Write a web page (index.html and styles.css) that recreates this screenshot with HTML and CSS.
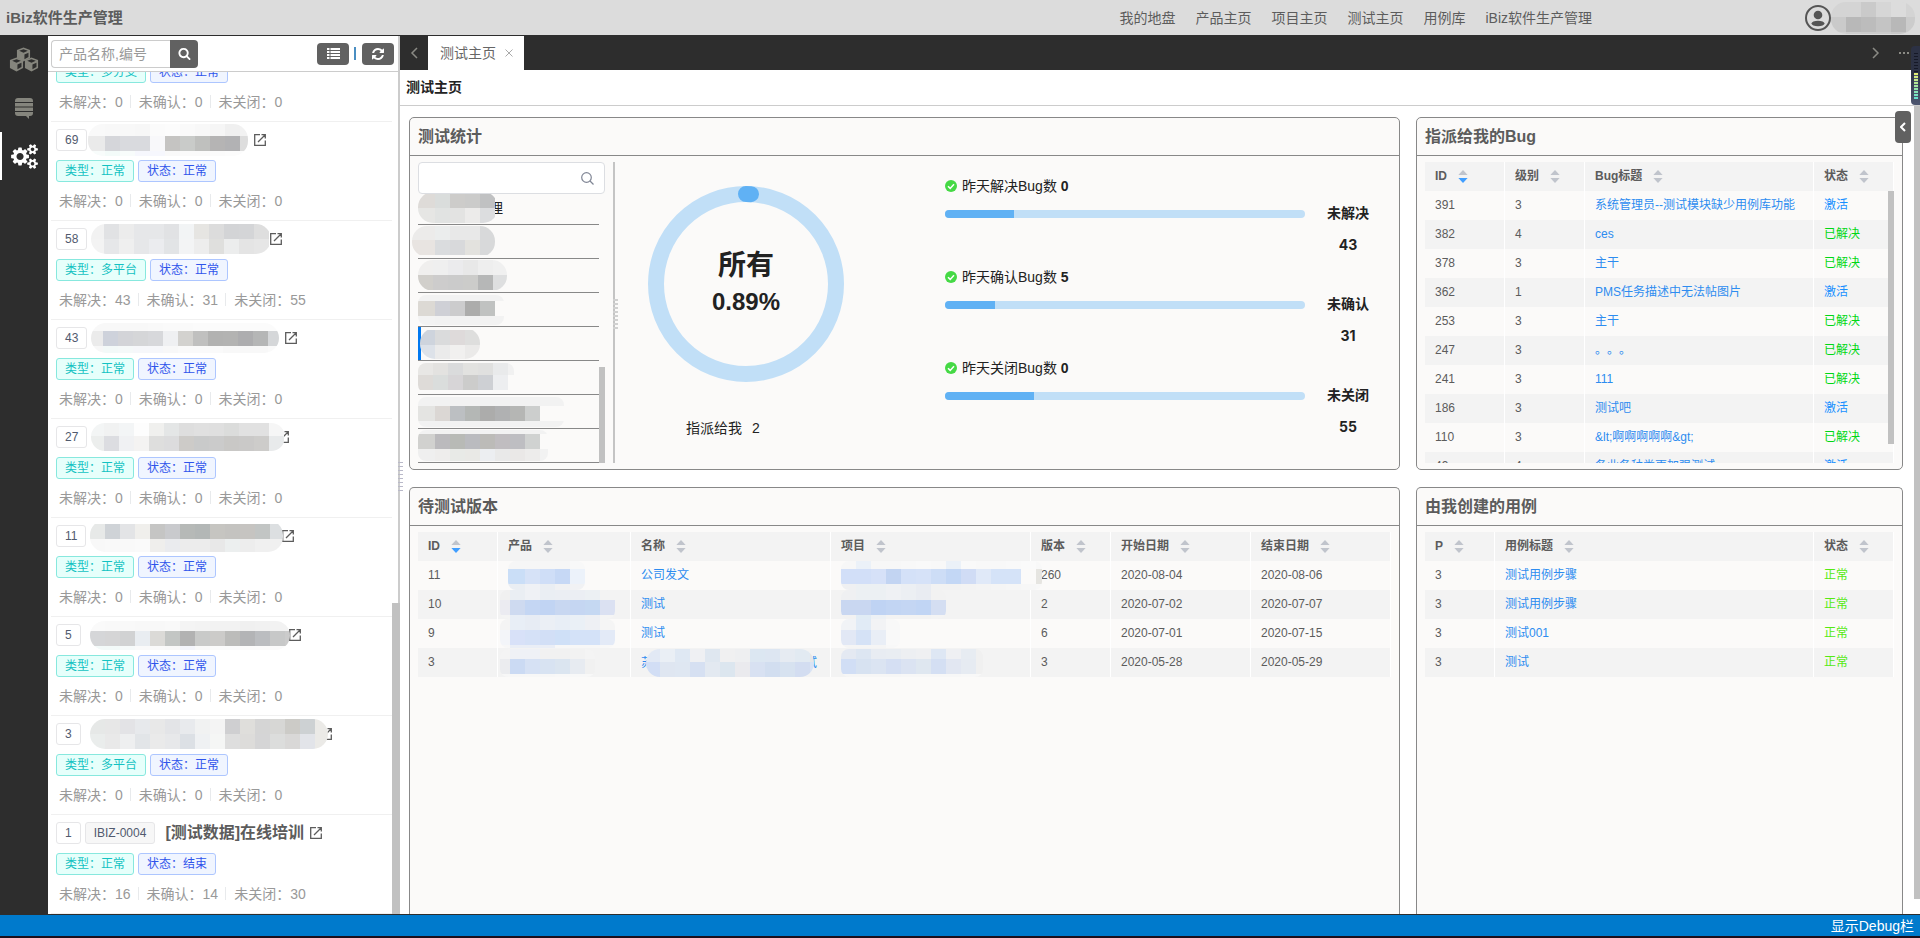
FILE: index.html
```html
<!DOCTYPE html>
<html lang="zh-CN">
<head>
<meta charset="utf-8">
<title>iBiz软件生产管理</title>
<link rel="stylesheet" href="styles.css">
</head>
<body>
<svg class="defs" aria-hidden="true">
  <symbol id="i-open" viewBox="0 0 12 12"><path d="M6 .7H.7v10.600h10.600V6.500M7.500.7h3.800v3.800M11 1 4 8" fill="none" stroke="currentColor" stroke-width="1.300"/></symbol>
  <symbol id="i-sort" viewBox="0 0 10 14"><path class="up" d="M5 0l5 5.500H0z"/><path class="down" d="M5 14l5-5.500H0z"/></symbol>
  <symbol id="i-check" viewBox="0 0 12 12"><circle cx="6" cy="6" r="6" fill="#45d945"/><path d="M3 6.200l2.200 2.200L9 4.300" fill="none" stroke="#fff" stroke-width="1.500"/></symbol>
  <symbol id="i-cube" viewBox="0 0 16 16"><path d="M8 .5l7 2.800v8.400l-7 3.800-7-3.800V3.300z" fill="currentColor"/><path d="M8 2.300l4.600 1.800L8 6 3.400 4.100zM9 8l4.300-1.900v4.500L9 13z" fill="#2d2d2d"/></symbol>
</svg>

<header class="topbar">
  <h1 class="brand">iBiz软件生产管理</h1>
  <nav class="topnav">
    <a href="#">我的地盘</a><a href="#">产品主页</a><a href="#">项目主页</a><a href="#">测试主页</a><a href="#">用例库</a><a href="#">iBiz软件生产管理</a>
  </nav>
  <div class="user">
    <svg class="avatar" viewBox="0 0 26 26"><circle cx="13" cy="13" r="12" fill="none" stroke="#555" stroke-width="2"/><circle cx="13" cy="10" r="4.300" fill="#555"/><ellipse cx="13" cy="18.500" rx="6.500" ry="2.800" fill="#555"/></svg>
    <svg class="mask" viewBox="1830 0 84 32" data-x="1830" data-y="0" data-rows="d4 d4 ca d6 dc d4/ca b8 bc c4 b8 cc/d2 ce cc cc c8 d2"></svg>
  </div>
</header>

<div class="workspace">
  <nav class="rail">
    <button class="rail-btn" aria-label="产品"><svg width="30" height="26" viewBox="0 0 30 26"><use href="#i-cube" x="7" y="0" width="15" height="15"/><use href="#i-cube" x="0" y="10" width="15" height="15"/><use href="#i-cube" x="15" y="10" width="15" height="15"/></svg></button>
    <button class="rail-btn" aria-label="列表"><svg width="18" height="21" viewBox="0 0 18 21" fill="currentColor"><path d="M3 0h12q3 0 3 3v1H0V3q0-3 3-3zM0 5h18v3.500H0zM0 9.500h18V13H0zM0 14h18v1q0 3-3 3h-1v3l-3-3H3q-3 0-3-3z"/></svg></button>
    <button class="rail-btn active" aria-label="测试"><svg width="27" height="25" viewBox="0 0 1920 1792" fill="currentColor"><path d="M896 896q0-106-75-181t-181-75-181 75-75 181 75 181 181 75 181-75 75-181zm768 512q0-52-38-90t-90-38-90 38-38 90q0 53 37.500 90.500t90.500 37.500 90.500-37.500 37.500-90.500zm0-1024q0-52-38-90t-90-38-90 38-38 90q0 53 37.500 90.500t90.500 37.500 90.500-37.500 37.500-90.500zm-384 421v185q0 10-7 19.500t-16 10.500l-155 24q-11 35-32 76 34 48 90 115 7 11 7 20 0 12-7 19-23 30-82.500 89.500t-78.500 59.500q-11 0-21-7l-115-90q-37 19-77 31-11 108-23 155-7 24-30 24h-186q-11 0-20-7.500t-10-17.500l-23-153q-34-10-75-31l-118 89q-7 7-20 7-11 0-21-8-144-133-144-160 0-9 7-19 10-14 41-53t47-61q-23-44-35-82l-152-24q-10-1-17-9.500t-7-19.500v-185q0-10 7-19.500t16-10.500l155-24q11-35 32-76-34-48-90-115-7-11-7-20 0-12 7-20 22-30 82-89t79-59q11 0 21 7l115 90q34-18 77-32 11-108 23-154 7-24 30-24h186q11 0 20 7.500t10 17.500l23 153q34 10 75 31l118-89q8-7 20-7 11 0 21 8 144 133 144 160 0 8-7 19-12 16-42 54t-45 60q23 48 34 82l152 23q10 2 17 10.500t7 19.500zm640 533v140q0 16-149 31-12 27-30 52 51 113 51 138 0 4-4 7-122 71-124 71-8 0-46-47t-52-68q-20 2-30 2t-30-2q-14 21-52 68t-46 47q-2 0-124-71-4-3-4-7 0-25 51-138-18-25-30-52-149-15-149-31v-140q0-16 149-31 13-29 30-52-51-113-51-138 0-4 4-7 4-2 35-20t59-34 30-16q8 0 46 46.500t52 67.500q20-2 30-2t30 2q51-71 92-112l6-2q4 0 124 70 4 3 4 7 0 25-51 138 17 23 30 52 149 15 149 31zm0-1024v140q0 16-149 31-12 27-30 52 51 113 51 138 0 4-4 7-122 71-124 71-8 0-46-47t-52-68q-20 2-30 2t-30-2q-14 21-52 68t-46 47q-2 0-124-71-4-3-4-7 0-25 51-138-18-25-30-52-149-15-149-31v-140q0-16 149-31 13-29 30-52-51-113-51-138 0-4 4-7 4-2 35-20t59-34 30-16q8 0 46 46.500t52 67.500q20-2 30-2t30 2q51-71 92-112l6-2q4 0 124 70 4 3 4 7 0 25-51 138 17 23 30 52 149 15 149 31z"/></svg></button>
  </nav>

  <aside class="sidebar">
    <form class="search-row">
      <input class="search-input" type="text" placeholder="产品名称,编号" aria-label="产品名称,编号">
      <button class="search-btn" type="button" aria-label="搜索"><svg width="13" height="13" viewBox="0 0 1792 1792" fill="#fff"><path d="M1216 832q0-185-131.500-316.500t-316.500-131.500-316.500 131.500-131.500 316.500 131.500 316.500 316.500 131.500 316.500-131.500 131.500-316.500zm512 832q0 52-38 90t-90 38q-54 0-90-38l-343-342q-179 124-399 124-143 0-273.500-55.500t-225-150-150-225-55.500-273.500 55.500-273.500 150-225 225-150 273.500-55.500 273.500 55.500 225 150 150 225 55.500 273.500q0 220-124 399l343 343q37 37 37 90z"/></svg></button>
      <button class="tool-btn push" type="button" aria-label="列表视图"><svg width="13" height="11" viewBox="0 0 13 11" fill="#fff"><path d="M0 0h2.500v2H0zM3.500 0H13v2H3.500zM0 3h2.500v2H0zM3.500 3H13v2H3.500zM0 6h2.500v2H0zM3.500 6H13v2H3.500zM0 9h2.500v2H0zM3.500 9H13v2H3.500z"/></svg></button>
      <span class="tool-sep"></span>
      <button class="tool-btn" type="button" aria-label="刷新"><svg width="14" height="14" viewBox="0 0 1792 1792" fill="#fff"><path d="M1639 1056q0 5-1 7-64 268-268 434.500t-478 166.500q-146 0-282.500-55t-243.500-157l-129 129q-19 19-45 19t-45-19-19-45v-448q0-26 19-45t45-19h448q26 0 45 19t19 45-19 45l-137 137q71 66 161 102t187 36q134 0 250-65t186-179q11-17 53-117 8-23 30-23h192q13 0 22.500 9.500t9.500 22.500zm25-800v448q0 26-19 45t-45 19h-448q-26 0-45-19t-19-45 19-45l138-138q-148-137-349-137-134 0-250 65t-186 179q-11 17-53 117-8 23-30 23h-199q-13 0-22.500-9.500t-9.500-22.500v-7q65-268 270-434.500t480-166.500q146 0 284 55.500t245 156.500l130-129q19-19 45-19t45 19 19 45z"/></svg></button>
    </form>
    <div class="product-list">
      <article class="product">
        <div class="p-title"><span class="badge">70</span></div>
        <div class="p-tags"><span class="tag teal">类型：多分支</span><span class="tag blue">状态：正常</span></div>
        <div class="p-stats"><span>未解决：0</span><span>未确认：0</span><span>未关闭：0</span></div>
      </article>
      <article class="product">
        <div class="p-title"><span class="badge">69</span><svg class="mask near" viewBox="88 123 160 32" data-x="90" data-y="120" data-rows="f9 f8 f8 f7 fb fc fa f8 f6 f0 f2/ea d5d6da d9dade d9dade f8f8fa c5c4c2 c9cbc9 bfc0be b5b4b4 b2b2b4 dd/f8fcfb f3fbf9 f8fcfb f6f7fd f6f7fd f9 fa fa fb fc fc"></svg><a class="open" href="#" aria-label="打开"><svg><use href="#i-open"/></svg></a></div>
        <div class="p-tags"><span class="tag teal">类型：正常</span><span class="tag blue">状态：正常</span></div>
        <div class="p-stats"><span>未解决：0</span><span>未确认：0</span><span>未关闭：0</span></div>
      </article>
      <article class="product">
        <div class="p-title"><span class="badge">58</span><svg class="mask" viewBox="92 225 180 30" data-x="90" data-y="225" data-rows="f2 e1e2e4 ec e6e7e9 e6e7e9 e1e2e4 f2f4f5 e6e5e2 dc d3d4d6 d4d5d7 de/f3 e6e7e9 ef e6e7e9 ebecef e2e4e6 f3f4f5 ed dfdfdd eceded e4 e6"></svg><a class="open tuck" href="#" aria-label="打开"><svg><use href="#i-open"/></svg></a></div>
        <div class="p-tags"><span class="tag teal">类型：多平台</span><span class="tag blue">状态：正常</span></div>
        <div class="p-stats"><span>未解决：43</span><span>未确认：31</span><span>未关闭：55</span></div>
      </article>
      <article class="product">
        <div class="p-title"><span class="badge">43</span><svg class="mask" viewBox="93 322 188 30" data-x="90" data-y="315" data-rows="f8 f8 f8 f8 f9 fa fa fb fb fb fb fb fb/eb ced2db d3d4d8 d5d6d8 d7d8db eff0f2 d3d2cf c0c0bf b2b2b1 b3b3b2 adadaf b5b6b6 d5d7d9/f7 f3f9f8 f5f9f9 f6f7fa f6f7fa f8 fa fa fa f8 f8 f8 fa"></svg><a class="open" href="#" aria-label="打开"><svg><use href="#i-open"/></svg></a></div>
        <div class="p-tags"><span class="tag teal">类型：正常</span><span class="tag blue">状态：正常</span></div>
        <div class="p-stats"><span>未解决：0</span><span>未确认：0</span><span>未关闭：0</span></div>
      </article>
      <article class="product">
        <div class="p-title"><span class="badge">27</span><svg class="mask" viewBox="92 422 194 28" data-x="90" data-y="420" data-rows="f3f5f5 f1f2f2 f3f5f6 fd f0f0ee e4e6e6 de e0 df dbdcdb e1 e1 f6/eceeed dcdde1 f0f1f3 f4f3f2 dededd dcdcdd cdcbc8 c9caca cb c9c8c6 cac9c8 cdccca e8eaeb"></svg><a class="open tuck-deep" href="#" aria-label="打开"><svg><use href="#i-open"/></svg></a></div>
        <div class="p-tags"><span class="tag teal">类型：正常</span><span class="tag blue">状态：正常</span></div>
        <div class="p-stats"><span>未解决：0</span><span>未确认：0</span><span>未关闭：0</span></div>
      </article>
      <article class="product">
        <div class="p-title"><span class="badge">11</span><svg class="mask" viewBox="90 521 193 32" data-x="90" data-y="525" data-rows="e7e9e8 cfd3d7 e3e4e6 f0efec c5c5c4 c9cacd b6b9b7 b3b7b6 c6c5c1 c4c3c0 c6c4c1 c2c5c4 dcdfe1/f8 f9 f9 fa efeeec eaebee ec ec e8 ecefef ed f0 f0"></svg><a class="open tuck" href="#" aria-label="打开"><svg><use href="#i-open"/></svg></a></div>
        <div class="p-tags"><span class="tag teal">类型：正常</span><span class="tag blue">状态：正常</span></div>
        <div class="p-stats"><span>未解决：0</span><span>未确认：0</span><span>未关闭：0</span></div>
      </article>
      <article class="product">
        <div class="p-title"><span class="badge">5</span><svg class="mask far" viewBox="90 620 200 29" data-x="90" data-y="615" data-rows="fa f9 f9 f8 f8 f9 f4 f3 f2 f2 f0 f1 f2 f2/d5d6d8 d5d5d6 d1d2d3 e9edf1 dbdad7 c3c6c4 b2 c9cac9 cccbc9 bcbcba b3b4b6 bbbdc0 c7c8c8 cb/f3faf9 f3faf9 f6fafa fa fa f9 f4f5fb f9 fb fb fb fb fb fb"></svg><a class="open tuck" href="#" aria-label="打开"><svg><use href="#i-open"/></svg></a></div>
        <div class="p-tags"><span class="tag teal">类型：正常</span><span class="tag blue">状态：正常</span></div>
        <div class="p-stats"><span>未解决：0</span><span>未确认：0</span><span>未关闭：0</span></div>
      </article>
      <article class="product">
        <div class="p-title"><span class="badge">3</span><svg class="mask far" viewBox="90 720 238 30" data-x="90" data-y="720" data-rows="e6e8e7 e7 e3e3e6 e7e9ec e8 e3e4e7 e8eaed f1f2f2 f4 cfcfd1 dfdedb d5 d7d7d5 cccbc7 cdd1d3 ebeae7/eaedec e9 eeeff0 e2e5e8 ea e7e8ea dce0e5 eff1f3 f5f6f5 de dddcda d5d5d6 dcdddc d9d8d7 e2e4e9 ebeae7"></svg><a class="open tuck-deep" href="#" aria-label="打开"><svg><use href="#i-open"/></svg></a></div>
        <div class="p-tags"><span class="tag teal">类型：多平台</span><span class="tag blue">状态：正常</span></div>
        <div class="p-stats"><span>未解决：0</span><span>未确认：0</span><span>未关闭：0</span></div>
      </article>
      <article class="product">
        <div class="p-title"><span class="badge">1</span><span class="badge code">IBIZ-0004</span><strong class="p-name">[测试数据]在线培训</strong><a class="open" href="#" aria-label="打开"><svg><use href="#i-open"/></svg></a></div>
        <div class="p-tags"><span class="tag teal">类型：正常</span><span class="tag blue">状态：结束</span></div>
        <div class="p-stats"><span>未解决：16</span><span>未确认：14</span><span>未关闭：30</span></div>
      </article>
    </div>
    <div class="side-thumb"></div>
    <div class="grip side-grip"></div>
  </aside>

  <main class="main">
    <div class="tabs">
      <button class="tab-arrow" aria-label="向左"><svg width="8" height="12" viewBox="0 0 8 12"><path d="M7 1L2 6l5 5" fill="none" stroke="#8a8a84" stroke-width="1.500"/></svg></button>
      <div class="tab"><span>测试主页</span><button class="tab-close" aria-label="关闭"><svg width="8" height="8" viewBox="0 0 8 8"><path d="M.5.5l7 7m0-7l-7 7" stroke="#aaa"/></svg></button></div>
      <button class="tab-arrow push" aria-label="向右"><svg width="8" height="12" viewBox="0 0 8 12"><path d="M1 1l5 5-5 5" fill="none" stroke="#8a8a84" stroke-width="1.500"/></svg></button>
      <button class="tab-more" aria-label="更多"><svg width="12" height="2" viewBox="0 0 12 2" fill="#8a8a84"><path d="M0 0h2v2H0zM4 0h2v2H4zM8 0h2v2H8z"/></svg></button>
    </div>
    <h2 class="page-title">测试主页</h2>

    <div class="board">
      <section class="card">
        <h3 class="card-title">测试统计</h3>
        <div class="card-body stats">
          <div class="picker">
            <label class="picker-search"><input type="text" aria-label="搜索产品"><svg width="13" height="13" viewBox="0 0 13 13"><circle cx="5.500" cy="5.500" r="4.800" fill="none" stroke="#808695" stroke-width="1.200"/><path d="M9 9l3.500 3.500" stroke="#808695" stroke-width="1.200"/></svg></label>
            <ul class="picker-list">
              <li><svg class="mask" viewBox="418 194 80 31" data-x="420" data-y="195" data-rows="dedbd8 dadddc cdccca cbcbca c0c1c2/e6e6e4 e1e3e2 e3e3e2 ecebea dcdddf"></svg><span class="under">理</span></li>
              <li><svg class="mask wide" viewBox="412 226 83 31" data-x="420" data-y="225" data-rows="ecebea ebeded e8 e8 d8d9da/e8e4e1 dadcde d8d9db e3e2de d8d9da"></svg></li>
              <li><svg class="mask" viewBox="420 255 89 31" data-x="420" data-y="255" data-rows="f0efee ef ebebed e8 ee f0/d1cfcb cdcccc cb ccccca b6b7b7 dedfe0"></svg></li>
              <li><svg class="mask square" viewBox="418 294 86 30" data-x="420" data-y="285" data-rows="f2 f2 f2 f2 f2 f2/dcd9d4 cfd0d6 cccccd acacab c0c2c1 fbfaf9/f3 f2 f2 f2 f2 f2"></svg></li>
              <li class="active"><svg class="mask" viewBox="420 328 60 31" data-x="420" data-y="330" data-rows="ced4dd dadbdc dedada dededd/dde2e9 ebebeb f1f0ef ebeae9"></svg></li>
              <li><svg class="mask square" viewBox="420 363 96 30" data-x="420" data-y="360" data-rows="e8e7e5 e3e2e0 dadbdc e2e2e0 e0e0df e9eaeb f1/dedbd8 dadddc d7d5d7 cccccb ced0d4 edeef0 fbfaf9"></svg></li>
              <li><svg class="mask square" viewBox="418 396 146 30" data-x="420" data-y="390" data-rows="f2 f2 f2 f2 f2 f2 f2 f2 f2 f2/e4e4e2 dbd7d4 bcbfc2 b4b7b5 acacab b0b1b2 b5b6b4 cccecd fbfaf9 fbfaf9/f2 f2 f2 f2 f2 f2 f2 f2 f2 f2"></svg></li>
              <li><svg class="mask square" viewBox="418 431 130 31" data-x="420" data-y="420" data-rows="f2 f2 f2 f2 f2 f2 f2 f2 f2/d1d1cf bbbabd b8bab6 babbbf bcbbb8 c0bdc0 bebec2 d0d2d1 fbfaf9/ef eeedec e8eae7 e9e9e6 eceef1 e9 eae8e7 edeceb f2"></svg></li>
            </ul>
            <div class="picker-thumb"></div>
          </div>
          <div class="split"><div class="grip split-grip"></div></div>
          <div class="gauge">
            <div class="ring">
              <svg viewBox="0 0 196 196"><circle cx="98" cy="98" r="90" fill="none" stroke="#c1dff7" stroke-width="16"/><path d="M98 8A90 90 0 0 1 103 8.140" fill="none" stroke="#60b1f4" stroke-width="16" stroke-linecap="round"/></svg>
              <div class="ring-text"><strong class="ring-name">所有</strong><strong class="ring-value">0.89%</strong></div>
            </div>
            <p class="assigned"><span>指派给我</span><span>2</span></p>
          </div>
          <div class="meters">
            <div class="meter"><div class="meter-main"><p class="meter-label"><svg><use href="#i-check"/></svg><span>昨天解决Bug数 <b>0</b></span></p><div class="bar"><div class="fill" style="width:19.200%"></div></div></div><div class="meter-side"><b>未解决</b><b class="num">43</b></div></div>
            <div class="meter"><div class="meter-main"><p class="meter-label"><svg><use href="#i-check"/></svg><span>昨天确认Bug数 <b>5</b></span></p><div class="bar"><div class="fill" style="width:13.900%"></div></div></div><div class="meter-side"><b>未确认</b><b class="num">31</b></div></div>
            <div class="meter"><div class="meter-main"><p class="meter-label"><svg><use href="#i-check"/></svg><span>昨天关闭Bug数 <b>0</b></span></p><div class="bar"><div class="fill" style="width:24.700%"></div></div></div><div class="meter-side"><b>未关闭</b><b class="num">55</b></div></div>
          </div>
        </div>
      </section>

      <section class="card">
        <h3 class="card-title">指派给我的Bug</h3>
        <div class="card-body">
          <div class="scroll">
          <table class="grid">
            <colgroup><col class="w80"><col class="w80"><col><col class="w80"></colgroup>
            <thead><tr><th>ID<svg class="sort desc"><use href="#i-sort"/></svg></th><th>级别<svg class="sort"><use href="#i-sort"/></svg></th><th>Bug标题<svg class="sort"><use href="#i-sort"/></svg></th><th>状态<svg class="sort"><use href="#i-sort"/></svg></th></tr></thead>
            <tbody>
              <tr><td>391</td><td>3</td><td><a href="#">系统管理员--测试模块缺少用例库功能</a></td><td class="s-active">激活</td></tr>
              <tr><td>382</td><td>4</td><td><a href="#">ces</a></td><td class="s-done">已解决</td></tr>
              <tr><td>378</td><td>3</td><td><a href="#">主干</a></td><td class="s-done">已解决</td></tr>
              <tr><td>362</td><td>1</td><td><a href="#">PMS任务描述中无法帖图片</a></td><td class="s-active">激活</td></tr>
              <tr><td>253</td><td>3</td><td><a href="#">主干</a></td><td class="s-done">已解决</td></tr>
              <tr><td>247</td><td>3</td><td><a href="#">。。。</a></td><td class="s-done">已解决</td></tr>
              <tr><td>241</td><td>3</td><td><a href="#">111</a></td><td class="s-done">已解决</td></tr>
              <tr><td>186</td><td>3</td><td><a href="#">测试吧</a></td><td class="s-active">激活</td></tr>
              <tr><td>110</td><td>3</td><td><a href="#">&amp;lt;啊啊啊啊啊&amp;gt;</a></td><td class="s-done">已解决</td></tr>
              <tr><td>49</td><td>4</td><td><a href="#">各业各种类更加强测试</a></td><td class="s-active">激活</td></tr>
            </tbody>
          </table>
          <div class="table-thumb"></div>
          </div>
        </div>
      </section>

      <section class="card tail">
        <h3 class="card-title">待测试版本</h3>
        <div class="card-body">
          <table class="grid">
            <colgroup><col class="w80"><col><col class="w200"><col class="w200"><col class="w80"><col class="w140"><col class="w140"></colgroup>
            <thead><tr><th>ID<svg class="sort desc"><use href="#i-sort"/></svg></th><th>产品<svg class="sort"><use href="#i-sort"/></svg></th><th>名称<svg class="sort"><use href="#i-sort"/></svg></th><th>项目<svg class="sort"><use href="#i-sort"/></svg></th><th>版本<svg class="sort"><use href="#i-sort"/></svg></th><th>开始日期<svg class="sort"><use href="#i-sort"/></svg></th><th>结束日期<svg class="sort"><use href="#i-sort"/></svg></th></tr></thead>
            <tbody>
              <tr><td>11</td><td class="veil"><svg class="mask square" viewBox="508 562 77 29" data-x="510" data-y="555" data-rows="f6 f6 f6 f6 f8/cadef7 d6e2f7 cfdef7 c6d8f5 ecf2fa/eaeef3 eff1f5 eaeef3 f0f1f3 f1f2f4"></svg></td><td><a href="#">公司发文</a></td><td class="veil"><svg class="mask square" viewBox="840 562 201 29" data-x="840" data-y="555" data-rows="f7 ebf1f8 f7 f7 f8 f9 f8 ebf1f8 f9 f8 f8 f9 fa f8/d2dff8 d2dff8 d6e1f8 c2d4f2 d4e1f8 d6e2f8 cdddf6 c3d7f5 d0dcf5 e0e9f8 d5e3f8 d5e3f8 fbfaf9 e6e5e1/eff0f2 ecf0f3 ecf0f3 eff1f4 eceff3 e9ecf2 f2 f2 f3 f4 f5 f6 f7 f8"></svg></td><td>260</td><td>2020-08-04</td><td>2020-08-06</td></tr>
              <tr><td>10</td><td class="veil out"><svg class="mask square" viewBox="500 590 115 29" data-x="495" data-y="585" data-rows="f0 eaeef3 eff1f5 eaeef3 ebeef3 ebeef3 ecf0f3 f3/ebebf1 cedaf0 c4d6f3 c1d4f3 c8d7f1 c5d6f2 c5d8f2 dbe1f2/f4 e8eef6 e7ecf4 ebeff5 e8eef6 eaf0f6 eef0f4 f5"></svg></td><td><a href="#">测试</a></td><td class="veil"><svg class="mask square" viewBox="840 590 105 29" data-x="840" data-y="585" data-rows="eff0f2 ecf0f3 ecf0f3 eff1f4 eceff3 e9ecf2 f2/c9d7f1 c9d7f1 bfd3f3 c2d5f3 c4d6f3 c1d5f4 d4def2/f2 e1ecf5 edf1f5 f3 f3 f3 f4"></svg></td><td>2</td><td>2020-07-02</td><td>2020-07-07</td></tr>
              <tr><td>9</td><td class="veil out"><svg class="mask square" viewBox="500 619 115 29" data-x="495" data-y="615" data-rows="f4 e8eef6 e7ecf4 ebeff5 e8eef6 eaf0f6 eef0f4 f5/f3f5f9 d8e1f8 d5e1f7 d2dff6 cfe0f7 d4e2f8 d4e2f8 e3eaf7/f7 eaeef6 eaeef6 eaeef6 f7 f7 f7 f8"></svg></td><td><a href="#">测试</a></td><td class="veil"><svg class="mask square" viewBox="840 619 59 29" data-x="840" data-y="615" data-rows="f1f3f6 e1ebf6 f2f3f5 f8/e2e8f5 d5e2f6 e9eef6 f9/f5 f5 f5 f8"></svg></td><td>6</td><td>2020-07-01</td><td>2020-07-15</td></tr>
              <tr><td>3</td><td class="veil out"><svg class="mask square" viewBox="500 650 95 28" data-x="495" data-y="645" data-rows="f4 eff1f6 eff1f6 f1 f1 f2 f4/ebecef cbdaf3 d6e1f4 d8e3f2 dbe5f0 e7ebf1 f1/f7 f7 f7 f7 f8 f8 f8"></svg></td><td class="veil-name"><a class="veil-link" href="#"><span>苏</span><svg class="mask" viewBox="646 647 168 28" data-x="645" data-y="645" data-rows="e2e9f5 eaeff5 dfe8f3 eff0f3 dfe7f0 f0f0f1 eeeff1 dce7f2 dde6f2 e6ebf2 e2eaf2 e7/d2def5 dfe6f1 dfe7f2 d6e0f2 e3e9f1 dce6ef eaeaee d8e1f2 d2def0 d7e2f0 d3ddf1 d9e3f4"></svg><span class="under">试</span></a></td><td class="veil"><svg class="mask square" viewBox="840 650 142 28" data-x="840" data-y="645" data-rows="e4e9f2 dde6f2 e8ecf2 e9edf2 edeff2 eff0f2 dee7f4 eff0f3 e7ecf2 f0/d1def5 d7e2f1 dbe4f2 d5dff3 dbe3f2 dfe7f0 d4dff3 e2e7f2 e6ebf2 f0/f6 f6 f6 f6 f7 f7 f7 f7 f8 f8"></svg></td><td>3</td><td>2020-05-28</td><td>2020-05-29</td></tr>
            </tbody>
          </table>
        </div>
      </section>

      <section class="card tail">
        <h3 class="card-title">由我创建的用例</h3>
        <div class="card-body">
          <table class="grid">
            <colgroup><col class="w70"><col><col class="w80"></colgroup>
            <thead><tr><th>P<svg class="sort"><use href="#i-sort"/></svg></th><th>用例标题<svg class="sort"><use href="#i-sort"/></svg></th><th>状态<svg class="sort"><use href="#i-sort"/></svg></th></tr></thead>
            <tbody>
              <tr><td>3</td><td><a href="#">测试用例步骤</a></td><td class="s-ok">正常</td></tr>
              <tr><td>3</td><td><a href="#">测试用例步骤</a></td><td class="s-ok">正常</td></tr>
              <tr><td>3</td><td><a href="#">测试001</a></td><td class="s-ok">正常</td></tr>
              <tr><td>3</td><td><a href="#">测试</a></td><td class="s-ok">正常</td></tr>
            </tbody>
          </table>
        </div>
      </section>
    </div>
    <div class="main-thumb"></div>
    <button class="drawer-btn" aria-label="展开"><svg width="6" height="10" viewBox="0 0 6 10"><path d="M5 1L1 5l4 4" fill="none" stroke="#fff" stroke-width="2"/></svg></button>
    <div class="level"><span class="level-off"></span><span class="level-on"></span></div>
  </main>
</div>

<footer class="debugbar"><button type="button">显示Debug栏</button></footer>
<script src="masks.js"></script>
</body>
</html>
```
FILE: styles.css
```css
* { box-sizing: border-box; }
html, body { height: 100%; }
body {
  margin: 0;
  display: flex;
  flex-direction: column;
  overflow: hidden;
  background: #fff;
  color: #222;
  font: 14px/20px "Liberation Sans", "Noto Sans CJK SC", sans-serif;
}
h1, h2, h3, p, ul { margin: 0; padding: 0; }
ul { list-style: none; }
a { color: inherit; text-decoration: none; }
button { margin: 0; padding: 0; border: 0; background: none; font: inherit; color: inherit; display: flex; align-items: center; justify-content: center; }
input { font: inherit; outline: 0; }
svg { display: block; flex: none; }
.defs { position: absolute; width: 0; height: 0; }
.push { margin-left: auto; }
.mask { border-radius: 15px; overflow: hidden; position: relative; z-index: 1; }
.mask.square { border-radius: 8px; }

/* top bar */
.topbar { height: 35px; flex: none; display: flex; align-items: center; padding: 0 6px; background: #dcdcdc; color: #5c5c5c; }
.brand { font-size: 15px; line-height: 24px; }
.topnav { display: flex; gap: 20px; margin-left: auto; }
.user { display: flex; align-items: center; width: 322px; padding-left: 213px; }
.avatar { width: 26px; height: 26px; }

.workspace { flex: 1; min-height: 0; display: flex; border-top: 1px solid #2d2d2d; border-bottom: 1px solid #2d2d2d; }

/* icon rail */
.rail { width: 48px; flex: none; background: #2d2d2d; }
.rail-btn { width: 48px; height: 48px; color: #85857d; }
.rail-btn.active { color: #fff; box-shadow: inset 2px 0 #fff; }

/* product sidebar */
.sidebar { position: relative; width: 352px; flex: none; display: flex; flex-direction: column; border-right: 2px solid #ccc; }
.search-row { height: 36px; flex: none; display: flex; align-items: center; padding: 0 4px 0 3px; border-bottom: 1px solid #ccc; }
.search-input { width: 119px; height: 28px; padding: 0 7px; border: 1px solid #ccc; border-right: 0; border-radius: 4px 0 0 4px; color: #555; }
.search-input::placeholder { color: #999; opacity: 1; }
.search-btn { width: 28px; height: 28px; background: #616161; border-radius: 0 4px 4px 0; }
.tool-btn { width: 32px; height: 22px; background: #616161; border-radius: 4px; }
.tool-sep { width: 2px; height: 13px; margin: 0 6px 0 5px; background: #4a8ec2; }
.product-list { flex: 1; min-height: 0; overflow: hidden; display: flex; flex-direction: column; justify-content: flex-end; padding: 0 6px 0 3px; }
.product { flex: none; padding: 7px 0 9px 5px; border-bottom: 1px solid #f0f0f0; }
.p-title { display: flex; align-items: center; height: 22px; }
.badge { height: 22px; padding: 0 8px; margin-right: 4px; border: 1px solid #e6e6e8; border-radius: 3px; font-size: 12px; line-height: 20px; color: #515a6e; }
.badge.code { background: #f7f7f7; margin-right: 10px; }
.p-title .mask { margin: -8px 0; }
.p-title .near { margin-left: -3px; }
.p-title .far { margin-left: 5px; }
.p-name { font-size: 16px; color: #5c5c5c; }
.open { margin-left: 6px; color: #5c5c5c; }
.open svg { width: 12px; height: 12px; }
.open.tuck { margin-left: -1px; }
.open.tuck-deep { margin-left: -8px; }
.p-tags { display: flex; gap: 4px; margin-top: 9px; }
.tag { height: 22px; padding: 0 8px; border: 1px solid; border-radius: 3px; font-size: 12px; line-height: 20px; }
.teal { color: #13c2c2; border-color: #87e8de; background: #e6fffb; }
.blue { color: #2f54eb; border-color: #adc6ff; background: #f0f5ff; }
.p-stats { display: flex; margin: 9px 0 0 3px; color: #999; }
.p-stats span { position: relative; padding-right: 16px; }
.p-stats span:not(:last-child)::after { content: ""; position: absolute; right: 8px; top: 3px; width: 1px; height: 13px; background: #e8eaec; }
.side-thumb { position: absolute; right: -2px; bottom: 0; width: 8px; height: 311px; background: #c1c1c1; }
.grip { position: absolute; z-index: 2; width: 5px; background: repeating-linear-gradient(#b9b9c9 0 1px, transparent 1px 4px); }
.side-grip { right: -5px; top: 426px; height: 30px; }

/* tabs and page title */
.main { position: relative; flex: 1; min-width: 0; display: flex; flex-direction: column; }
.tabs { height: 34px; flex: none; display: flex; background: #2d2d2d; }
.tab-arrow { width: 28px; }
.tab-more { width: 30px; }
.tab { display: flex; align-items: center; gap: 9px; width: 96px; padding-left: 12px; background: #fff; color: #666; }
.page-title { height: 36px; flex: none; padding-left: 6px; border-bottom: 1px solid #ccc; font-size: 14px; line-height: 34px; }

/* cards */
.board { flex: 1; min-height: 0; display: grid; grid-template-columns: minmax(0, 991fr) minmax(0, 487fr); grid-template-rows: 353px minmax(0, 1fr); gap: 17px 16px; padding: 11px 17px 0 9px; overflow: hidden; }
.card { display: flex; flex-direction: column; min-height: 0; border: 1px solid #888; border-radius: 5px; background: #fbfaf9; }
.card.tail { border-bottom: 0; border-radius: 5px 5px 0 0; }
.card-title { flex: none; height: 38px; padding-left: 8px; border-bottom: 1px solid #888; font-size: 16px; line-height: 37px; color: #5c5c5c; }
.card-body { flex: 1; min-height: 0; padding: 6px 8px; }

/* statistics card */
.stats { display: flex; }
.picker { position: relative; width: 187px; flex: none; display: flex; flex-direction: column; }
.picker-search { display: flex; align-items: center; height: 32px; flex: none; padding-right: 10px; border: 1px solid #dcdee2; border-radius: 4px; background: #fff; }
.picker-search input { flex: 1; min-width: 0; border: 0; background: none; }
.picker-list { flex: 1; min-height: 0; overflow: hidden; display: flex; flex-direction: column; justify-content: flex-end; margin: 0 6px 0 -8px; padding-left: 8px; }
.picker-list li { flex: none; height: 34px; display: flex; align-items: center; border-bottom: 1px solid #888; }
.picker-list li.active { box-shadow: inset 3px 0 #0078f0; padding-left: 2px; }
.mask.wide { margin-left: -6px; }
.under { margin-left: -9px; }
.picker-thumb { position: absolute; right: 0; bottom: 0; width: 6px; height: 96px; background: #c1c1c1; }
.split { position: relative; width: 2px; margin-left: 8px; background: #c4c4c4; }
.split-grip { top: 137px; left: 0; height: 30px; background: repeating-linear-gradient(#d0d0d0 0 2px, transparent 2px 4px); }
.gauge { flex: none; width: 262px; padding-top: 24px; display: flex; flex-direction: column; align-items: center; }
.ring { display: grid; width: 196px; height: 196px; }
.ring > * { grid-area: 1 / 1; }
.ring-text { display: flex; flex-direction: column; align-items: center; justify-content: center; }
.ring-name { font-size: 28px; line-height: 36px; }
.ring-value { font-size: 24px; line-height: 36px; }
.assigned { display: flex; gap: 10px; margin-top: 36px; padding-right: 46px; }
.meters { flex: 1; min-width: 0; padding: 14px 8px 0 68px; }
.meter { display: flex; gap: 22px; height: 91px; }
.meter-main { flex: 1; min-width: 0; }
.meter-label { display: flex; align-items: center; gap: 5px; }
.meter-label svg { width: 12px; height: 12px; }
.bar { height: 8px; margin-top: 14px; border-radius: 4px; background: #c1dff7; overflow: hidden; }
.fill { height: 8px; background: #60b1f4; }
.meter-side { width: 42px; margin-right: 14px; padding-top: 27px; display: flex; flex-direction: column; gap: 12px; align-items: center; }
.num { font-family: Inter, sans-serif; }

/* tables */
.scroll { position: relative; height: 100%; overflow: hidden; }
.grid { width: 100%; table-layout: fixed; border-collapse: separate; border-spacing: 0; font-size: 12px; line-height: 16px; color: #5c5c5c; text-spacing-trim: space-all; }
.grid th, .grid td { height: 29px; padding: 0 0 2px 10px; border-right: 1px solid #fff; text-align: left; white-space: nowrap; }
.grid th { background: #f3f3f3; }
.grid tbody tr:nth-child(even) { background: #f3f3f3; }
.grid a { color: #2d8cf0; }
.w70 { width: 70px; }
.w80 { width: 80px; }
.w140 { width: 140px; }
.w200 { width: 200px; }
.sort { display: inline-block; width: 10px; height: 13px; margin-left: 11px; vertical-align: middle; fill: #c0c4cc; --down: #c0c4cc; }
.sort.desc { --down: #409eff; }
.down { fill: var(--down); }
.s-active { color: #1890ff; }
.s-done { color: #00d814; }
.s-ok { color: #55ea12; }
.grid .veil, .grid .veil-name { padding-bottom: 0; }
.grid .veil { line-height: 0; }
.veil .mask { margin-right: -20px; }
.veil.out .mask { margin-left: -8px; }
.grid .veil-link { display: flex; align-items: center; }
.veil-link .mask { margin: 0 0 0 -7px; }
.table-thumb { position: absolute; right: 0; top: 29px; width: 6px; height: 253px; background: #c1c1c1; }

/* overlays on the right edge */
.main-thumb { position: absolute; right: 0; top: 70px; bottom: 15px; width: 6px; background: #c1c1c1; }
.drawer-btn { position: absolute; right: 9px; top: 75px; width: 16px; height: 32px; border-radius: 4px; background: #616161; }
.level { position: absolute; right: 0; top: 10px; width: 9px; height: 59px; padding: 7px 2px 0 3px; border-radius: 4px 0 0 4px; background: linear-gradient(#2c3144 45%, #4d5670); }
.level span { display: block; }
.level-off { height: 20px; background: repeating-linear-gradient(#151827 0 1px, transparent 1px 3px); }
.level-on { height: 26px; background: repeating-linear-gradient(transparent 0 2px, #4d5670 2px 3px), linear-gradient(#e6ec70, #62e0d0); }

.debugbar { height: 23px; flex: none; display: flex; justify-content: flex-end; padding: 0 6px; border-bottom: 2px solid #1c0f1c; background: #007acc; color: #fff; }
```
FILE: masks.js
```js
// Paints the 15px blocks that hide private names.
document.querySelectorAll('svg[data-rows]').forEach(function (svg) {
  var box = svg.viewBox.baseVal;
  var x0 = Number(svg.dataset.x);
  var y0 = Number(svg.dataset.y);
  svg.setAttribute('width', box.width);
  svg.setAttribute('height', box.height);
  svg.dataset.rows.split('/').forEach(function (row, r) {
    var cells = row.split(' ');
    cells.forEach(function (c, i) {
      var rect = document.createElementNS('http://www.w3.org/2000/svg', 'rect');
      var left = i === 0 ? Math.min(x0, box.x) : x0 + i * 15;
      rect.setAttribute('x', left);
      rect.setAttribute('y', y0 + r * 15);
      rect.setAttribute('width', x0 + (i + 1) * 15 - left);
      rect.setAttribute('height', 15);
      rect.setAttribute('fill', '#' + (c.length === 2 ? c + c + c : c));
      svg.appendChild(rect);
    });
  });
});
```
